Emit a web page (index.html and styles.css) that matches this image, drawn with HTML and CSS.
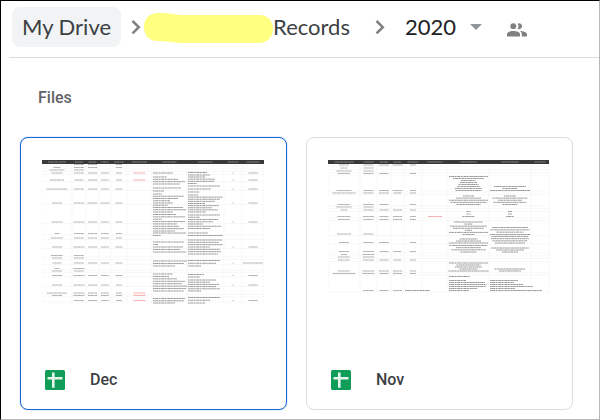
FILE: index.html
```html
<!DOCTYPE html>
<html lang="en">
<head>
  <meta charset="UTF-8">
  <meta name="viewport" content="width=device-width, initial-scale=1">
  <title>2020 - My Drive</title>
  <link rel="stylesheet" href="styles.css">
</head>
<body>
<div class="drive">
  <nav class="path" aria-label="Folder path">
    <a class="crumb crumb-root" href="#">My Drive</a>
    <svg class="chevron" viewBox="0 0 10 14" aria-hidden="true"><path d="M1.5 1 7.8 7.2 1.5 13.4"/></svg>
    <a class="crumb crumb-folder" href="#">
      <svg class="marker" viewBox="0 0 129 30" aria-hidden="true">
        <path d="M14 0C21-.3 28 1.3 37 2H115C124 2 129 8 129 16S123 30 115 30H37C29 29.5 22 28 14 28 5 28 0 22 0 14S5 .3 14 0Z"/>
      </svg>Records</a>
    <svg class="chevron chevron-last" viewBox="0 0 10 14" aria-hidden="true"><path d="M1.5 1 7.8 7.2 1.5 13.4"/></svg>
    <button class="crumb crumb-current" type="button">2020
      <svg class="caret" viewBox="0 0 12 6" aria-hidden="true"><path d="M0 0h12L6 6z"/></svg>
    </button>
    <button class="share" type="button" aria-label="Shared">
      <svg viewBox="0 0 20 14" aria-hidden="true">
        <circle cx="6.3" cy="3.2" r="2.9"/>
        <path d="M10.6.7A2.9 2.9 0 1 1 10.6 5.7 4.2 4.2 0 0 0 10.6.7Z"/>
        <path d="M0 13.5V11.2C0 9 3.8 8 6.5 8S13 9 13 11.2v2.3Z"/>
        <path d="M13 8.1c3.1.1 7 1.2 7 3.3v2.1h-5.2v-2.3c0-1.3-.7-2.3-1.8-3.1Z"/>
      </svg>
    </button>
  </nav>
  <main>
    <h2>Files</h2>
    <div class="files">
      <a class="file selected" href="#">
        <svg class="preview" data-sheet="dec" viewBox="0 0 222 146" aria-hidden="true"></svg>
        <span class="file-name">
          <svg class="sheet-icon" viewBox="0 0 20 20" aria-hidden="true"><rect width="20" height="20" rx="1.5"/><path d="M2.5 8.2h15M8.3 2.5v15.2"/></svg>
          Dec
        </span>
      </a>
      <a class="file" href="#">
        <svg class="preview" data-sheet="nov" viewBox="0 0 222 146" aria-hidden="true"></svg>
        <span class="file-name">
          <svg class="sheet-icon" viewBox="0 0 20 20" aria-hidden="true"><rect width="20" height="20" rx="1.5"/><path d="M2.5 8.2h15M8.3 2.5v15.2"/></svg>
          Nov
        </span>
      </a>
    </div>
  </main>
</div>
<script src="preview.js"></script>
</body>
</html>
```
FILE: styles.css
```css
* {
  box-sizing: border-box;
}
body {
  margin: 0;
  background: #fff;
  font-family: Roboto, "Liberation Sans", sans-serif;
}
.drive {
  min-height: 100vh;
  border: 1px solid #b7b7b7;
  border-top-color: #000;
  border-left-color: #000;
}
a {
  color: inherit;
  text-decoration: none;
}
button {
  padding: 0;
  border: 0;
  background: none;
}

/* folder path */
.path {
  display: flex;
  align-items: center;
  height: 57px;
  margin-left: 8px;
  padding: 0 3px 4px;
  border-bottom: 1px solid #dadada;
}
.crumb {
  display: flex;
  align-items: center;
  height: 40px;
  font-family: Lato, "Open Sans", sans-serif;
  font-size: 22px;
  line-height: 40px;
  white-space: nowrap;
  color: #3c4043;
}
.crumb-root {
  padding: 0 10px;
  border-radius: 8px;
  background: #f1f3f4;
}
.chevron {
  width: 10px;
  height: 14px;
  margin: 0 3px 0 10px;
  fill: none;
  stroke: #808080;
  stroke-width: 2.5;
}
.chevron-last {
  margin: 0 20px 0 25px;
}
.marker {
  width: 129px;
  height: 30px;
  margin-top: 2px;
  fill: #ffff80;
}
.crumb-current {
  gap: 14px;
  color: #202124;
}
.caret {
  width: 12px;
  height: 6px;
  fill: #919699;
}
.share {
  display: flex;
  margin: 6px 0 0 25px;
}
.share svg {
  width: 20px;
  height: 14px;
  fill: #808080;
}

/* file grid */
h2 {
  margin: 0;
  padding: 30px 37px 0;
  font-size: 16px;
  font-weight: 500;
  line-height: 20px;
  color: #5f6368;
}
.files {
  display: grid;
  grid-template-columns: 1fr 1fr;
  gap: 19px;
  padding: 29px 26px 8px 19px;
}
.file {
  display: flex;
  flex-direction: column;
  justify-content: space-between;
  border: 1px solid #dadce0;
  border-radius: 8px;
}
.file.selected {
  border-color: #1967d2;
  box-shadow: 0 0 1px #1967d2;
}
.preview {
  display: block;
  margin: 22px 22px 0 21px;
}
.file-name {
  display: flex;
  align-items: center;
  gap: 25px;
  padding: 63px 24px 18px;
  font-size: 16px;
  font-weight: 500;
  line-height: 22px;
  color: #3c4043;
}
.sheet-icon {
  width: 20px;
  height: 20px;
  fill: #0f9d58;
  stroke: #e8f5ee;
  stroke-width: 2.6;
}
.sheet-icon rect {
  stroke: none;
}

/* sheet previews */
.preview .head {
  fill: #39393b;
}
.preview .grid {
  fill: none;
  stroke: #f3f3f3;
  stroke-width: .6;
}
.preview .cell {
  stroke: #555;
  stroke-width: 1.2;
  stroke-dasharray: 1.3 .3 .8 .2;
  opacity: .5;
}
.preview .note {
  stroke: #444;
  stroke-width: 1;
  stroke-dasharray: 1.7 .3 .9 .2 2.3 .4;
  opacity: .55;
}
.preview .red {
  stroke: #f04848;
}
.preview .title {
  stroke: #ddd;
}
```
FILE: preview.js
```js
// rows: [y, widths of the texts in the first columns], 0 = empty
// notes: [column, first y, last y, widths of the lines, 'c' = centred]
const sheets = {
  dec: {
    height: 144,
    cols: [0, 30, 44, 57, 69, 85, 110, 145, 182, 200, 222],
    rows: [
      [4.5, 0, 10, 9, 0, 6], [7.5, 7, 10, 9, 0, 6], [10, 15, 10], [13, 11, 10, 9, 8, 6, 12],
      [20, 14, 9, 9, 8, 6, 12], [29, 21, 10, 9, 8, 7], [43, 10, 11, 10, 9, 7], [62, 11, 11, 9, 8, 7],
      [73.5, 5, 10, 9, 8, 6], [78, 12, 10, 9, 8, 6], [87, 10, 11, 9, 8, 7], [95.5, 12, 10],
      [98, 10, 10], [103, 9, 10, 9, 8, 7], [108.5, 5, 11], [111, 10, 10], [115.5, 10, 11, 9, 8, 7],
      [125, 10, 11, 9, 8, 6], [133, 20, 11, 9, 8, 6, 12], [135.5, 10, 11, 9, 8, 6, 12], [140.5, 0, 10, 9, 8, 6, 12]
    ],
    side: [13, 20, 29, 43, 62, 87, 103, 115.5, 125, 140.5],
    notes: [
      [6, 13, 13, [20]], [6, 17, 24, [14, 25, 32, 27]], [6, 28, 31, [28, 11]],
      [6, 34, 52, [9, 31, 25, 17, 20, 15, 30, 33, 20]], [6, 54.5, 71, [23, 32, 9, 32, 24, 26, 31, 22]],
      [6, 73, 75.5, [33, 8]], [6, 82, 92, [31, 5, 30, 27, 33]], [6, 101, 106, [34, 31, 22]],
      [6, 114, 131, [20, 16, 24, 32, 29, 34, 33, 31]], [6, 138.5, 143, [32, 31, 22]],
      [7, 12.5, 15, [19, 22]], [7, 17, 23.5, [17, 27, 26, 9]], [7, 26, 32, [32, 23, 11]],
      [7, 35, 52, [10, 35, 32, 27, 17, 31, 24, 30, 18]], [7, 55, 68.5, [32, 12, 30, 25, 15, 33, 22]],
      [7, 73, 75.5, [20, 35]], [7, 80, 94, [34, 31, 35, 22, 32, 33, 30]], [7, 100.5, 106, [32, 28, 13]],
      [7, 114.5, 117, [16, 12]], [7, 120, 131, [28, 22, 31, 28, 32, 13]], [7, 137.5, 143, [32, 22, 17]]
    ]
  },
  nov: {
    height: 132,
    cols: [0, 32, 49, 63, 76, 94, 120, 161, 203, 221],
    rows: [
      [5, 10, 10, 10, 10, 6], [8, 7, 10], [11, 15, 10], [13.5, 12, 10, 9, 0, 6],
      [30.5, 15, 10, 10, 10, 6], [33, 23, 10, 10, 8, 6], [44.5, 12, 11, 9, 0, 6], [47, 15, 10],
      [50, 7, 10, 9, 9, 6], [56.5, 13, 11, 9, 9, 6, 14], [59.5, 12, 10, 9, 9, 6], [74, 14, 10],
      [82.5, 10, 10, 10, 0, 6], [91.5, 10, 11, 9, 8, 6], [94.5, 6, 12], [97, 12, 11],
      [100, 12, 11, 9, 8, 6], [111, 12, 12, 10, 9, 6], [113.5, 22, 12, 9, 9, 6], [130.5, 0, 11, 9, 9]
    ],
    side: [],
    notes: [
      [6, 16.5, 30.5, [39, 31, 15, 17, 20, 22, 27, 26], 'c'], [6, 36, 44.5, [11, 25, 39, 36, 24], 'c'],
      [6, 51.5, 56.5, [4, 4, 12], 'c'], [6, 62, 74.5, [29, 8, 37, 31, 7, 39, 12], 'c'],
      [6, 79, 83, [18, 25, 39], 'c'], [6, 85.5, 92, [38, 25, 34, 16], 'c'],
      [6, 103, 111, [39, 24, 27, 18, 40], 'c'], [6, 116.5, 116.5, [21]],
      [6, 120.5, 130.5, [17, 36, 38, 37, 28, 20]],
      [7, 26.5, 30.5, [32, 15, 40], 'c'], [7, 36, 44.5, [12, 35, 24, 33, 15], 'c'],
      [7, 51.5, 56.5, [4, 4, 8], 'c'], [7, 67.5, 74.5, [36, 39, 27, 40], 'c'],
      [7, 76.5, 83, [37, 38, 35, 30], 'c'], [7, 88, 92, [38, 28, 16], 'c'],
      [7, 109, 111, [31, 22], 'c'], [7, 120.5, 130.5, [28, 24, 33, 43, 25, 52]],
      [4, 130.5, 130.5, [25]]
    ]
  }
};

function line(x, y, w, name) {
  return `<path class="${name}" d="M${x} ${y}h${w}"/>`;
}

function draw(sheet) {
  const { cols, rows, side, notes, height } = sheet;
  const right = cols[cols.length - 1];
  const mid = i => (cols[i] + cols[i + 1]) / 2;
  let grid = '';
  cols.forEach(x => grid += `M${x} 4V${height}`);
  rows.forEach(r => grid += `M0 ${r[0] + 1.5}H${right}`);
  let out = `<path class="grid" d="${grid}"/><rect class="head" width="${right}" height="4"/>`;

  for (let i = 0; i < cols.length - 1; i++) {
    const w = (cols[i + 1] - cols[i]) * (i === 6 || i === 7 ? .4 : .6);
    out += line(mid(i) - w / 2, 2, w, 'cell title');
  }
  rows.forEach(([y, ...widths]) => {
    widths.forEach((w, i) => {
      if (w) out += line(mid(i) - w / 2, y, w, i === 5 ? 'cell red' : 'cell');
    });
  });
  side.forEach(y => {
    const w = y === 103 ? 20 : 9;
    out += line(mid(8) - .5, y, 1, 'cell') + line(mid(9) - w / 2, y, w, 'cell');
  });
  notes.forEach(([col, from, to, widths, align]) => {
    const step = widths.length > 1 ? (to - from) / (widths.length - 1) : 0;
    widths.forEach((w, i) => {
      const x = align ? mid(col) - w / 2 : cols[col] + 1;
      out += line(x, from + step * i, w, 'note');
    });
  });
  return out;
}

document.querySelectorAll('.preview').forEach(svg => {
  svg.innerHTML = draw(sheets[svg.dataset.sheet]);
});
```
